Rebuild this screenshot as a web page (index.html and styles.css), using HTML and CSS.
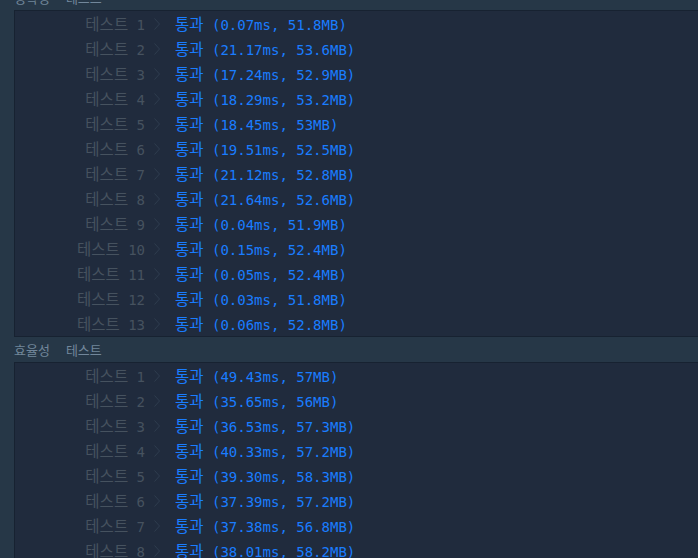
FILE: index.html
```html
<!DOCTYPE html>
<html lang="ko">
<head>
  <meta charset="UTF-8" />
  <title>채점 결과</title>
  <link rel="stylesheet" href="styles.css">
</head>
<body>

<div class="console">

  <div class="group-title"><span class="word">정확성</span><span>테스트</span></div>
  <div class="group">
    <div class="row"><span class="label"><span class="ko">테스트</span> 1</span><svg class="chev" viewBox="0 0 6 12"><polyline points="0.5,0.5 5.5,6 0.5,11.5"/></svg><span class="pass"><span class="ko">통과</span> (0.07ms, 51.8MB)</span></div>
    <div class="row"><span class="label"><span class="ko">테스트</span> 2</span><svg class="chev" viewBox="0 0 6 12"><polyline points="0.5,0.5 5.5,6 0.5,11.5"/></svg><span class="pass"><span class="ko">통과</span> (21.17ms, 53.6MB)</span></div>
    <div class="row"><span class="label"><span class="ko">테스트</span> 3</span><svg class="chev" viewBox="0 0 6 12"><polyline points="0.5,0.5 5.5,6 0.5,11.5"/></svg><span class="pass"><span class="ko">통과</span> (17.24ms, 52.9MB)</span></div>
    <div class="row"><span class="label"><span class="ko">테스트</span> 4</span><svg class="chev" viewBox="0 0 6 12"><polyline points="0.5,0.5 5.5,6 0.5,11.5"/></svg><span class="pass"><span class="ko">통과</span> (18.29ms, 53.2MB)</span></div>
    <div class="row"><span class="label"><span class="ko">테스트</span> 5</span><svg class="chev" viewBox="0 0 6 12"><polyline points="0.5,0.5 5.5,6 0.5,11.5"/></svg><span class="pass"><span class="ko">통과</span> (18.45ms, 53MB)</span></div>
    <div class="row"><span class="label"><span class="ko">테스트</span> 6</span><svg class="chev" viewBox="0 0 6 12"><polyline points="0.5,0.5 5.5,6 0.5,11.5"/></svg><span class="pass"><span class="ko">통과</span> (19.51ms, 52.5MB)</span></div>
    <div class="row"><span class="label"><span class="ko">테스트</span> 7</span><svg class="chev" viewBox="0 0 6 12"><polyline points="0.5,0.5 5.5,6 0.5,11.5"/></svg><span class="pass"><span class="ko">통과</span> (21.12ms, 52.8MB)</span></div>
    <div class="row"><span class="label"><span class="ko">테스트</span> 8</span><svg class="chev" viewBox="0 0 6 12"><polyline points="0.5,0.5 5.5,6 0.5,11.5"/></svg><span class="pass"><span class="ko">통과</span> (21.64ms, 52.6MB)</span></div>
    <div class="row"><span class="label"><span class="ko">테스트</span> 9</span><svg class="chev" viewBox="0 0 6 12"><polyline points="0.5,0.5 5.5,6 0.5,11.5"/></svg><span class="pass"><span class="ko">통과</span> (0.04ms, 51.9MB)</span></div>
    <div class="row"><span class="label"><span class="ko">테스트</span> 10</span><svg class="chev" viewBox="0 0 6 12"><polyline points="0.5,0.5 5.5,6 0.5,11.5"/></svg><span class="pass"><span class="ko">통과</span> (0.15ms, 52.4MB)</span></div>
    <div class="row"><span class="label"><span class="ko">테스트</span> 11</span><svg class="chev" viewBox="0 0 6 12"><polyline points="0.5,0.5 5.5,6 0.5,11.5"/></svg><span class="pass"><span class="ko">통과</span> (0.05ms, 52.4MB)</span></div>
    <div class="row"><span class="label"><span class="ko">테스트</span> 12</span><svg class="chev" viewBox="0 0 6 12"><polyline points="0.5,0.5 5.5,6 0.5,11.5"/></svg><span class="pass"><span class="ko">통과</span> (0.03ms, 51.8MB)</span></div>
    <div class="row"><span class="label"><span class="ko">테스트</span> 13</span><svg class="chev" viewBox="0 0 6 12"><polyline points="0.5,0.5 5.5,6 0.5,11.5"/></svg><span class="pass"><span class="ko">통과</span> (0.06ms, 52.8MB)</span></div>
  </div>

  <div class="group-title"><span class="word">효율성</span><span>테스트</span></div>
  <div class="group">
    <div class="row"><span class="label"><span class="ko">테스트</span> 1</span><svg class="chev" viewBox="0 0 6 12"><polyline points="0.5,0.5 5.5,6 0.5,11.5"/></svg><span class="pass"><span class="ko">통과</span> (49.43ms, 57MB)</span></div>
    <div class="row"><span class="label"><span class="ko">테스트</span> 2</span><svg class="chev" viewBox="0 0 6 12"><polyline points="0.5,0.5 5.5,6 0.5,11.5"/></svg><span class="pass"><span class="ko">통과</span> (35.65ms, 56MB)</span></div>
    <div class="row"><span class="label"><span class="ko">테스트</span> 3</span><svg class="chev" viewBox="0 0 6 12"><polyline points="0.5,0.5 5.5,6 0.5,11.5"/></svg><span class="pass"><span class="ko">통과</span> (36.53ms, 57.3MB)</span></div>
    <div class="row"><span class="label"><span class="ko">테스트</span> 4</span><svg class="chev" viewBox="0 0 6 12"><polyline points="0.5,0.5 5.5,6 0.5,11.5"/></svg><span class="pass"><span class="ko">통과</span> (40.33ms, 57.2MB)</span></div>
    <div class="row"><span class="label"><span class="ko">테스트</span> 5</span><svg class="chev" viewBox="0 0 6 12"><polyline points="0.5,0.5 5.5,6 0.5,11.5"/></svg><span class="pass"><span class="ko">통과</span> (39.30ms, 58.3MB)</span></div>
    <div class="row"><span class="label"><span class="ko">테스트</span> 6</span><svg class="chev" viewBox="0 0 6 12"><polyline points="0.5,0.5 5.5,6 0.5,11.5"/></svg><span class="pass"><span class="ko">통과</span> (37.39ms, 57.2MB)</span></div>
    <div class="row"><span class="label"><span class="ko">테스트</span> 7</span><svg class="chev" viewBox="0 0 6 12"><polyline points="0.5,0.5 5.5,6 0.5,11.5"/></svg><span class="pass"><span class="ko">통과</span> (37.38ms, 56.8MB)</span></div>
    <div class="row"><span class="label"><span class="ko">테스트</span> 8</span><svg class="chev" viewBox="0 0 6 12"><polyline points="0.5,0.5 5.5,6 0.5,11.5"/></svg><span class="pass"><span class="ko">통과</span> (38.01ms, 58.2MB)</span></div>
  </div>

</div>

</body>
</html>
```

FILE: styles.css
```css
* { box-sizing: border-box; }
html, body { margin: 0; background: #263747; overflow: hidden; }

.console {
  margin-top: -15px;
  padding-left: 14px;
  font-family: "DejaVu Sans Mono", "Noto Sans CJK KR", monospace;
  font-size: 14px;
}

.group-title {
  height: 25px;
  line-height: 25px;
  font-family: "Noto Sans CJK KR", sans-serif;
  font-size: 13px;
  color: #72879b;
}

.group-title .word { margin-right: 16px; }

.group {
  background: #202b3d;
  border-top: 1px solid #172231;
  border-left: 1px solid #172231;
  border-bottom: 1px solid #172231;
}

.row {
  display: flex;
  align-items: center;
  height: 25px;
  line-height: 20px;
  white-space: pre;
}

.ko {
  font-family: "Noto Sans CJK KR", sans-serif;
  font-size: 15.5px;
}

.label {
  width: 130px;
  text-align: right;
  color: #46525f;
}

.chev {
  width: 6px;
  height: 12px;
  margin: 0 15px 0 9px;
  fill: none;
  stroke: #2f3d4f;
  stroke-width: 1;
}

.pass { color: #1a7dff; }
```
